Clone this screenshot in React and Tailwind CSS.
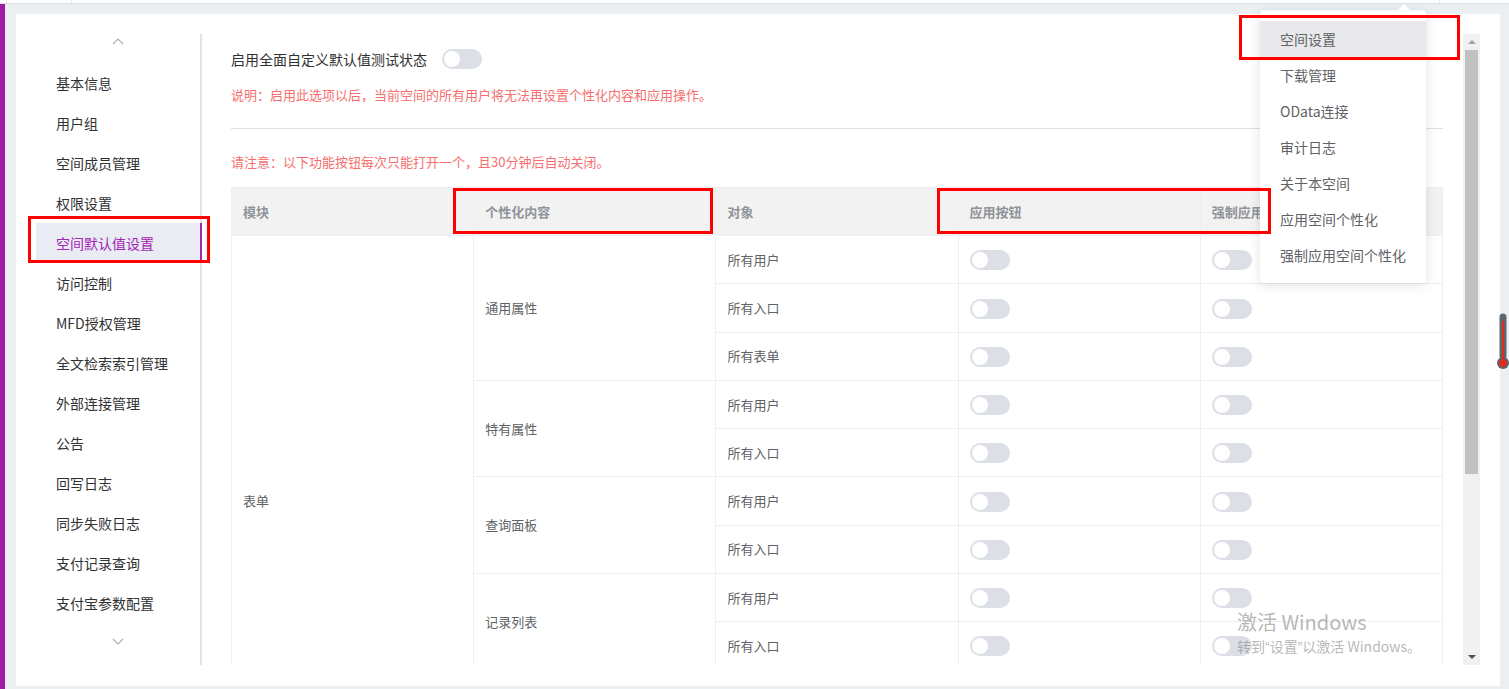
import React from 'react';

const FONT = { fontFamily: '"Noto Sans CJK SC", "Liberation Sans", sans-serif' };

const menuItems = [
  '基本信息', '用户组', '空间成员管理', '权限设置', '空间默认值设置', '访问控制', 'MFD授权管理',
  '全文检索索引管理', '外部连接管理', '公告', '回写日志', '同步失败日志', '支付记录查询', '支付宝参数配置',
];

const groups = [
  { name: '通用属性', rows: ['所有用户', '所有入口', '所有表单'] },
  { name: '特有属性', rows: ['所有用户', '所有入口'] },
  { name: '查询面板', rows: ['所有用户', '所有入口'] },
  { name: '记录列表', rows: ['所有用户', '所有入口'] },
  { name: '详情页', rows: ['所有用户', '所有入口'] },
];

const dropItems = ['空间设置', '下载管理', 'OData连接', '审计日志', '关于本空间', '应用空间个性化', '强制应用空间个性化'];

function Toggle() {
  return (
    <span className="inline-flex items-center w-10 h-5 rounded-full bg-[#dcdfe6] p-[2px] align-middle">
      <span className="w-4 h-4 rounded-full bg-white" />
    </span>
  );
}

function Chevron({ down }) {
  return (
    <svg width="12" height="7" viewBox="0 0 12 7" fill="none" stroke="#a8b0bb" strokeWidth="1.2">
      {down ? <path d="M1 1l5 5 5-5" /> : <path d="M1 6l5-5 5 5" />}
    </svg>
  );
}

export default function App() {
  const total = groups.reduce((n, g) => n + g.rows.length, 0);

  return (
    <div className="relative h-screen w-full overflow-hidden bg-[#eceff2] flex flex-col" style={FONT}>
      {/* top strip */}
      <div className="h-[4px] bg-white border-b border-[#dcdfe6] flex shrink-0">
        <div className="w-[6px]" />
        <div className="w-[65px] border-l border-[#e4e7ed]" />
        <div className="flex-1 border-l border-[#e4e7ed]" />
        <div className="w-[70px] border-l border-[#e4e7ed]" />
      </div>

      <div className="flex flex-1 min-h-0">
        <div className="w-[5px] bg-[#9c1ba9] shrink-0" />
        <div className="flex-1 pl-[11px] pt-[10px] pr-[9px] pb-[3px] min-h-0">
          <div className="bg-white h-full flex pt-[20px] pb-[21px] pr-[20px]">
            {/* sidebar */}
            <div className="w-[186px] shrink-0 border-r-2 border-[#dfe3e9] pl-[20px] flex flex-col">
              <div className="h-[29px] flex justify-center pt-[4px]">
                <Chevron />
              </div>
              {menuItems.map((m) => {
                const active = m === '空间默认值设置';
                return (
                  <div
                    key={m}
                    className={
                      active
                        ? 'h-10 flex items-center pl-[20px] text-[14px] bg-[#e9ecf3] text-[#a425b5] -mr-[2px] border-r-2 border-[#a425b5]'
                        : 'h-10 flex items-center pl-[20px] text-[14px] text-[#303133]'
                    }
                  >
                    {m}
                  </div>
                );
              })}
              <div className="flex justify-center pt-[15px]">
                <Chevron down />
              </div>
            </div>

            {/* content */}
            <div className="flex-1 min-w-0 overflow-hidden pl-[29px] pr-[20px] pt-[15px]">
              <div className="flex items-center h-5">
                <span className="text-[14px] text-[#303133]">启用全面自定义默认值测试状态</span>
                <span className="ml-[15px] flex"><Toggle /></span>
              </div>
              <div className="mt-[16px] text-[13px] leading-5 text-[#f76e6e]">
                说明：启用此选项以后，当前空间的所有用户将无法再设置个性化内容和应用操作。
              </div>
              <div className="mt-[23px] h-px bg-[#dcdfe6]" />
              <div className="mt-[23px] text-[13px] leading-5 text-[#f76e6e]">
                请注意：以下功能按钮每次只能打开一个，且30分钟后自动关闭。
              </div>

              <table className="mt-[15px] w-full table-fixed border-collapse text-[13px]">
                <thead>
                  <tr className="bg-[#f2f2f2] text-[#909399]">
                    {['模块', '个性化内容', '对象', '应用按钮', '强制应用按钮'].map((h) => (
                      <th key={h} className="h-[48px] border border-[#ebeef5] px-[11px] text-left font-bold">
                        {h}
                      </th>
                    ))}
                  </tr>
                </thead>
                <tbody className="text-[#606266]">
                  {groups.map((g, gi) =>
                    g.rows.map((r, ri) => (
                      <tr key={g.name + r}>
                        {gi === 0 && ri === 0 && (
                          <td rowSpan={total} className="border border-[#ebeef5] px-[11px]">表单</td>
                        )}
                        {ri === 0 && (
                          <td rowSpan={g.rows.length} className="border border-[#ebeef5] px-[11px]">{g.name}</td>
                        )}
                        <td className="h-[48.25px] border border-[#ebeef5] px-[11px]">{r}</td>
                        <td className="h-[48.25px] border border-[#ebeef5] px-[11px]"><Toggle /></td>
                        <td className="h-[48.25px] border border-[#ebeef5] px-[11px]"><Toggle /></td>
                      </tr>
                    ))
                  )}
                </tbody>
              </table>
            </div>

            {/* scrollbar */}
            <div className="w-[17px] shrink-0 bg-[#f1f1f1] flex flex-col items-center">
              <div className="h-[16px] flex items-center justify-center">
                <span className="w-0 h-0 border-l-[4px] border-r-[4px] border-b-[4px] border-l-transparent border-r-transparent border-b-[#a3a3a3]" />
              </div>
              <div className="w-[13px] h-[424px] bg-[#c1c1c1]" />
              <div className="flex-1" />
              <div className="h-[16px] flex items-center justify-center">
                <span className="w-0 h-0 border-l-[4px] border-r-[4px] border-t-[4px] border-l-transparent border-r-transparent border-t-[#505050]" />
              </div>
            </div>
          </div>
        </div>
      </div>

      {/* dropdown menu */}
      <div className="absolute left-[1260px] top-[10px] w-[166px] bg-white rounded-[4px] shadow-[0_2px_12px_rgba(0,0,0,0.12)] pt-[11px] pb-[10px]">
        <span className="absolute -top-[6px] right-[16px] w-0 h-0 border-l-[6px] border-r-[6px] border-b-[6px] border-l-transparent border-r-transparent border-b-white" />
        {dropItems.map((d, i) => (
          <div
            key={d}
            className={`h-9 flex items-center pl-[20px] text-[14px] text-[#606266] ${i === 0 ? 'bg-[#e9e9eb]' : ''}`}
          >
            {d}
          </div>
        ))}
      </div>

      {/* thermometer widget */}
      <svg className="absolute left-[1497px] top-[313px]" width="12" height="57" viewBox="0 0 12 57">
        <rect x="2.5" y="0.5" width="7" height="46" rx="3.5" fill="#5b6670" />
        <circle cx="6" cy="50" r="6" fill="#5b6670" />
        <rect x="5" y="8" width="2" height="40" fill="#e02a1c" />
        <circle cx="6" cy="50" r="4" fill="#e02a1c" />
      </svg>

      {/* windows watermark */}
      <div className="absolute left-[1237px] top-[609px] text-[rgba(120,120,120,0.55)] pointer-events-none">
        <div className="text-[20px] leading-[26px]">激活 Windows</div>
        <div className="text-[14px] leading-[20px] mt-[1px]">
          转到<span style={{ fontFamily: '"Liberation Sans", sans-serif' }}>“</span>设置<span style={{ fontFamily: '"Liberation Sans", sans-serif' }}>”</span>以激活 Windows。
        </div>
      </div>

      {/* red annotation boxes */}
      <div className="absolute left-[1239px] top-[15px] w-[221px] h-[45px] border-[3px] border-[#ff0000]" />
      <div className="absolute left-[28px] top-[216px] w-[182px] h-[47px] border-[3px] border-[#ff0000]" />
      <div className="absolute left-[453px] top-[188px] w-[260px] h-[46px] border-[3px] border-[#ff0000]" />
      <div className="absolute left-[937px] top-[188px] w-[334px] h-[46px] border-[3px] border-[#ff0000]" />
    </div>
  );
}
